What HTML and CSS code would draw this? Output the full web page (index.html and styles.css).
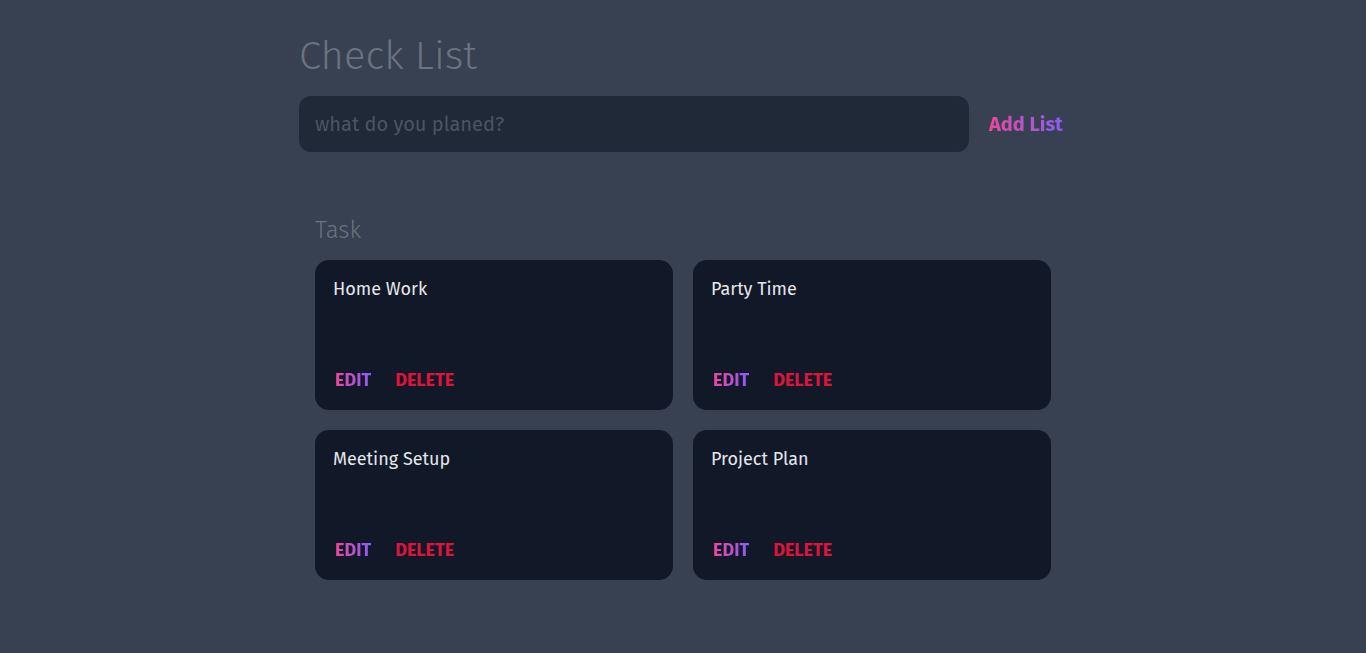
FILE: index.html
```html
<!DOCTYPE html>
<html lang="en">
<head>
<meta charset="utf-8">
<title>Check List</title>
<link rel="stylesheet" href="styles.css">
</head>
<body>
<main class="container">
  <h1 class="title">Check List</h1>
  <form class="add-form">
    <input class="add-input" type="text" placeholder="what do you planed?">
    <button class="add-btn" type="button"><span class="grad">Add List</span></button>
  </form>
  <section class="tasks">
    <h2 class="tasks-label">Task</h2>
    <div class="grid">
      <div class="card">
        <p class="card-title">Home Work</p>
        <div class="actions"><span class="edit grad">EDIT</span><span class="delete">DELETE</span></div>
      </div>
      <div class="card">
        <p class="card-title">Party Time</p>
        <div class="actions"><span class="edit grad">EDIT</span><span class="delete">DELETE</span></div>
      </div>
      <div class="card">
        <p class="card-title">Meeting Setup</p>
        <div class="actions"><span class="edit grad">EDIT</span><span class="delete">DELETE</span></div>
      </div>
      <div class="card">
        <p class="card-title">Project Plan</p>
        <div class="actions"><span class="edit grad">EDIT</span><span class="delete">DELETE</span></div>
      </div>
    </div>
  </section>
</main>
</body>
</html>
```

FILE: styles.css
```css
* { box-sizing: border-box; }
html, body { margin: 0; padding: 0; }
body {
  background: #374151;
  font-family: "Fira Sans", "Noto Sans", "Open Sans", sans-serif;
  min-height: 100vh;
}
.container {
  width: 768px;
  margin: 0 auto;
  padding-top: 30px;
}
.title {
  margin: 0;
  font-size: 40px;
  font-weight: 300;
  color: #6b7280;
  line-height: 52px;
}
.add-form {
  display: flex;
  align-items: center;
  gap: 20px;
  margin-top: 14px;
}
.add-input {
  width: 670px;
  height: 56px;
  border: none;
  outline: none;
  background: #1f2937;
  border-radius: 12px;
  padding: 0 16px;
  font-family: inherit;
  font-size: 20px;
  color: #d1d5db;
}
.add-input::placeholder { color: #4b5563; }
.add-btn {
  background: none;
  border: none;
  padding: 0;
  font-family: inherit;
  font-size: 20px;
  font-weight: 700;
  cursor: pointer;
}
.grad {
  background: linear-gradient(90deg, #ec4899, #8b5cf6);
  -webkit-background-clip: text;
  background-clip: text;
  color: transparent;
}
.tasks {
  padding: 0 16px;
  margin-top: 64px;
}
.tasks-label {
  margin: 0 0 16px;
  font-size: 24px;
  font-weight: 300;
  color: #6b7280;
  line-height: 28px;
}
.grid {
  display: grid;
  grid-template-columns: 1fr 1fr;
  gap: 20px;
}
.card {
  background: #111827;
  border-radius: 14px;
  height: 150px;
  padding: 17px 18px 19px;
  display: flex;
  flex-direction: column;
  justify-content: space-between;
}
.card-title {
  margin: 0;
  font-size: 18px;
  color: #e5e7eb;
  line-height: 24px;
}
.actions {
  display: flex;
  gap: 24px;
  padding-left: 2px;
  font-size: 18px;
  font-weight: 700;
  line-height: 22px;
}
.delete { color: #dc143c; }
```
